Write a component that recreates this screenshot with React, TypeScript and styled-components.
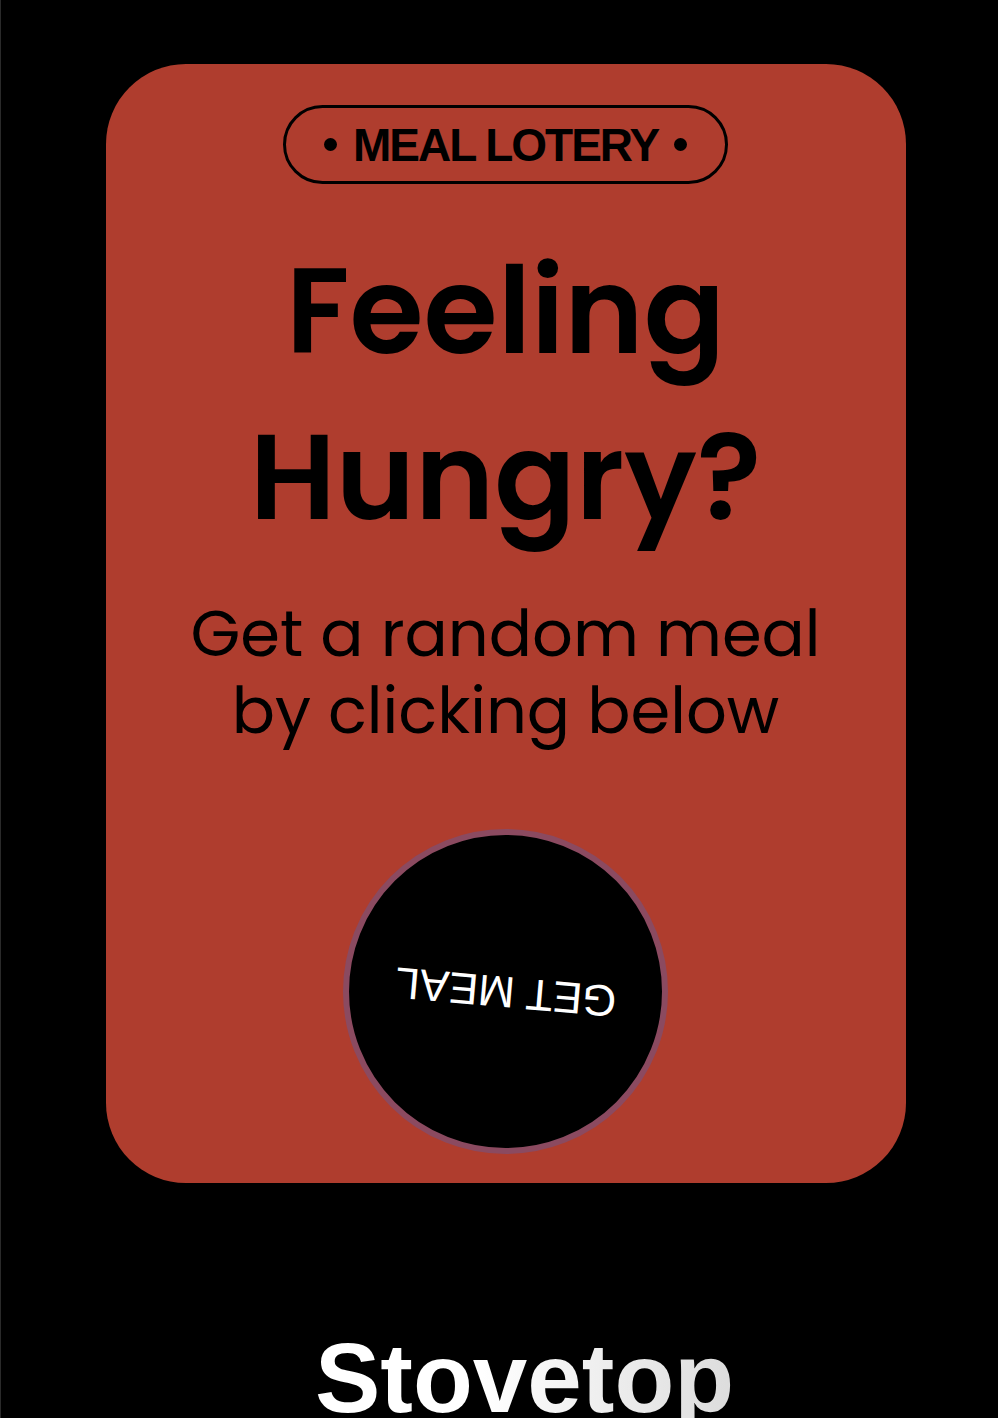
import React from "react";
import styled, { createGlobalStyle } from "styled-components";

const Global = createGlobalStyle`
  html, body { margin: 0; padding: 0; background: #000; }
  body { font-family: "Liberation Sans", Arial, sans-serif; overflow: hidden; }
`;

const Page = styled.div`
  min-height: 1418px;
  background: #000;
  border-left: 1px solid #2a2a2a;
  box-sizing: border-box;
  padding: 64px 0 0 12px;
  display: flex;
  flex-direction: column;
  align-items: center;
`;

const Card = styled.section`
  width: 800px;
  height: 1119px;
  flex-shrink: 0;
  box-sizing: border-box;
  background: #af3d2e;
  border-radius: 80px;
  padding: 41px 80px 0;
  display: flex;
  flex-direction: column;
  align-items: center;
`;

const Badge = styled.div`
  width: 445px;
  height: 79px;
  flex-shrink: 0;
  box-sizing: border-box;
  border: 3.5px solid #000;
  border-radius: 40px;
  display: flex;
  align-items: center;
  justify-content: center;
  gap: 16px;
  font-family: "Liberation Sans", Arial, sans-serif;
  font-weight: 700;
  font-size: 46px;
  letter-spacing: -2px;
  color: #000;
`;

const Dot = styled.span`
  width: 13px;
  height: 13px;
  border-radius: 50%;
  background: #000;
`;

const Heading = styled.h1`
  margin: 44px 0 0;
  font-family: "Poppins", Inter, sans-serif;
  font-weight: 600;
  font-size: 120px;
  line-height: 166px;
  text-align: center;
  color: #000;
`;

const Sub = styled.p`
  margin: 35px 0 0;
  font-family: "Poppins", Inter, sans-serif;
  font-weight: 400;
  font-size: 64px;
  line-height: 77px;
  text-align: center;
  color: #000;
`;

const MealButton = styled.div`
  margin-top: 80px;
  flex-shrink: 0;
  width: 325px;
  height: 325px;
  border-radius: 50%;
  background: #000;
  border: 6px solid #8b4a60;
  box-sizing: border-box;
  display: flex;
  align-items: center;
  justify-content: center;
  cursor: pointer;
`;

const ButtonLabel = styled.span`
  display: inline-block;
  transform: rotate(185deg);
  color: #fff;
  font-family: "Liberation Sans", Arial, sans-serif;
  font-size: 44px;
`;

const Brand = styled.h2`
  margin: 146px 0 0 38px;
  font-family: "Liberation Sans", Arial, sans-serif;
  font-weight: 700;
  font-size: 98px;
  line-height: 1;
  background: linear-gradient(90deg, #ffffff 40%, #dcdcdc 100%);
  -webkit-background-clip: text;
  background-clip: text;
  color: transparent;
`;

export default function App() {
  return (
    <>
      <Global />
      <Page>
        <Card>
          <Badge>
            <Dot />
            MEAL LOTERY
            <Dot />
          </Badge>
          <Heading>Feeling Hungry?</Heading>
          <Sub>Get a random meal by clicking below</Sub>
          <MealButton role="button" tabIndex={0}>
            <ButtonLabel>GET MEAL</ButtonLabel>
          </MealButton>
        </Card>
        <Brand>Stovetop</Brand>
      </Page>
    </>
  );
}
